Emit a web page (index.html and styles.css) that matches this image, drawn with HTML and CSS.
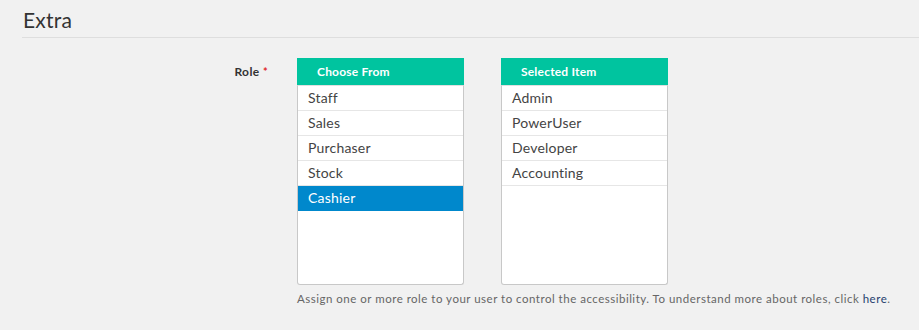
FILE: index.html
```html
<!DOCTYPE html>
<html lang="en">
<head>
    <meta charset="UTF-8">
    <title>Extra - Role</title>
    <link rel="stylesheet" href="styles.css">
</head>
<body>
    <div class="section">
        <h2 class="section-title">Extra</h2>

        <div class="form-row">
            <label class="form-label">Role <span class="required">*</span></label>
            <div class="form-field">
                <div class="dual-list">
                    <div class="list-box">
                        <div class="list-header">Choose From</div>
                        <ul class="list-items">
                            <li>Staff</li>
                            <li>Sales</li>
                            <li>Purchaser</li>
                            <li>Stock</li>
                            <li class="active">Cashier</li>
                        </ul>
                    </div>
                    <div class="list-box">
                        <div class="list-header">Selected Item</div>
                        <ul class="list-items">
                            <li>Admin</li>
                            <li>PowerUser</li>
                            <li>Developer</li>
                            <li>Accounting</li>
                        </ul>
                    </div>
                </div>
                <p class="help-text">Assign one or more role to your user to control the accessibility. To understand more about roles, click <a href="#">here</a>.</p>
            </div>
        </div>
    </div>
</body>
</html>
```

FILE: styles.css
```css
body {
    margin: 0;
    padding: 0;
    background-color: #f1f1f1;
    font-family: 'Lato', 'Noto Sans', sans-serif;
    color: #333;
}
.section {
    padding: 8px 0 0 22px;
}
.section-title {
    margin: 0;
    padding: 0 0 5px 1px;
    font-size: 21px;
    font-weight: normal;
    line-height: 24px;
    letter-spacing: 0.2px;
    color: #333;
    border-bottom: 1px solid #dedede;
}
.form-row {
    display: flex;
    margin-top: 20px;
}
.form-label {
    width: 246px;
    text-align: right;
    font-size: 12px;
    font-weight: bold;
    color: #333;
    padding-top: 6px;
    letter-spacing: 0.4px;
}
.required {
    color: #e0262a;
    font-size: 11px;
}
.form-field {
    margin-left: 29px;
}
.dual-list {
    display: flex;
    gap: 37px;
}
.list-box {
    width: 167px;
}
.list-header {
    background-color: #00c49f;
    color: #fff;
    font-size: 12px;
    font-weight: bold;
    height: 27px;
    line-height: 27px;
    padding-left: 20px;
    letter-spacing: 0.2px;
}
.list-items {
    list-style: none;
    margin: 0;
    padding: 0;
    height: 198px;
    background-color: #fff;
    border: 1px solid #c8c8c8;
    border-top-color: #e0e0e0;
    border-radius: 0 0 3px 3px;
}
.list-items li {
    height: 24px;
    line-height: 24px;
    padding-left: 10px;
    font-size: 14px;
    color: #444;
    letter-spacing: 0.2px;
    border-bottom: 1px solid #e6e6e6;
}
.list-items li.active {
    background-color: #0088cc;
    color: #fff;
    border-bottom-color: #0088cc;
}
.help-text {
    margin: 7px 0 0 0;
    font-size: 11.5px;
    letter-spacing: 0.5px;
    color: #666;
    white-space: nowrap;
}
.help-text a {
    color: #1f3f6e;
    text-decoration: none;
}
```
